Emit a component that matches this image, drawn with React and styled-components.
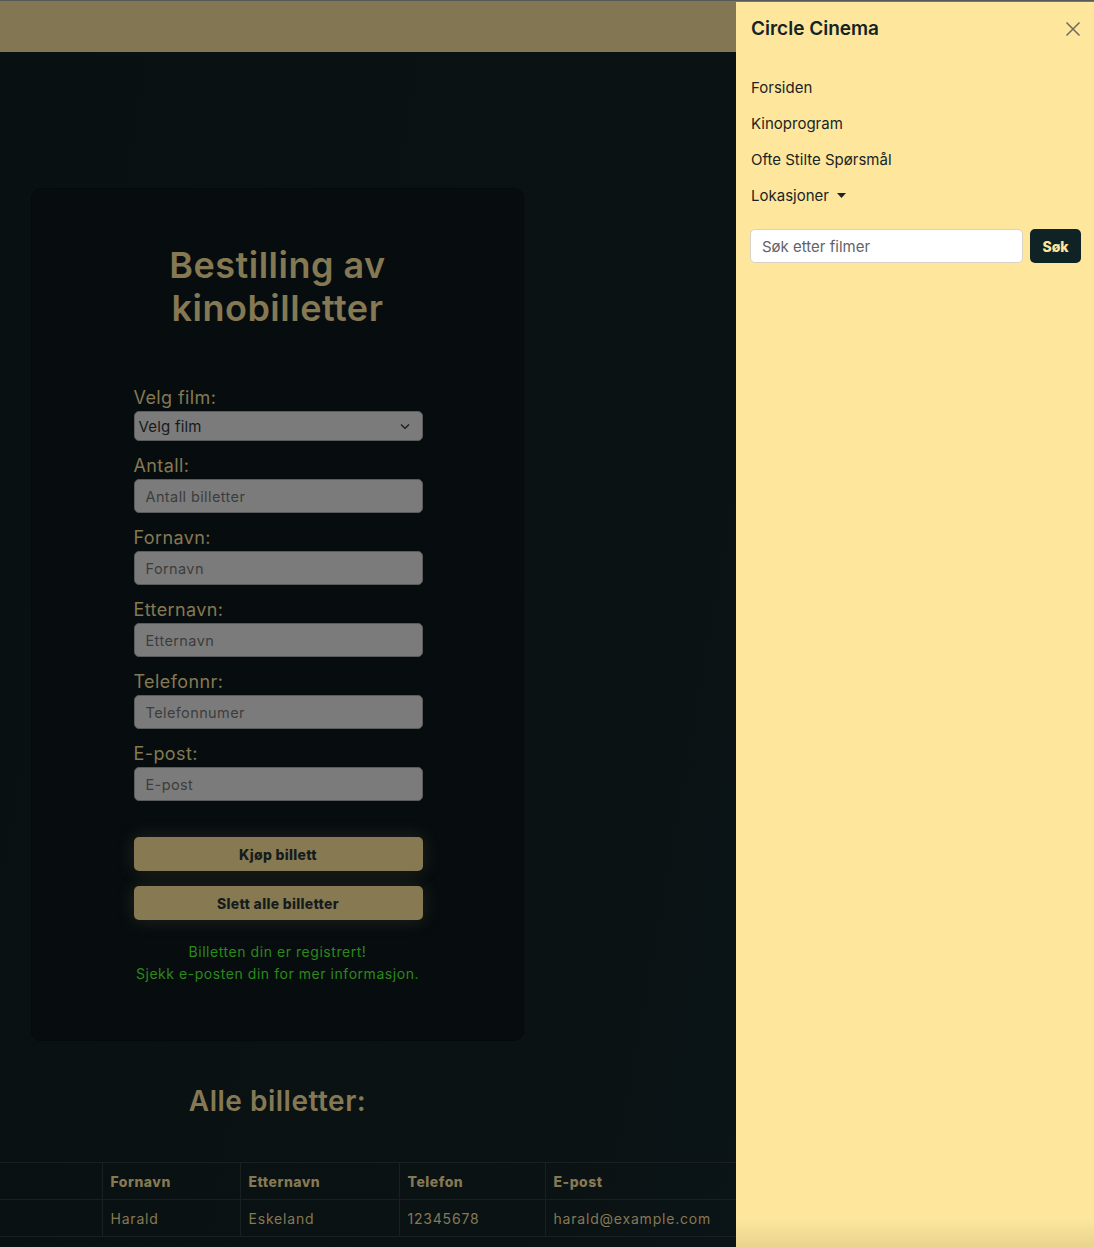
import React from "react";
import styled, { createGlobalStyle } from "styled-components";

const Global = createGlobalStyle`
  * { box-sizing: border-box; }
  html, body { margin: 0; padding: 0; }
  body {
    font-family: Inter, "Noto Sans", "DejaVu Sans", sans-serif;
    background: #0a1214;
    overflow: hidden;
  }
`;

const Page = styled.div`
  position: relative;
  width: 1094px;
  height: 1247px;
  border-top: 1px solid #555a5c;
  background: linear-gradient(100deg, #091012 0%, #0a1214 55%, #0c1618 100%);
  overflow: hidden;
`;

const NavBar = styled.header`
  height: 51px;
  background: #827752;
`;

const Main = styled.main`
  display: flex;
  flex-direction: column;
`;

const LeftColumn = styled.section`
  width: 555px;
  padding: 136px 31px 0;
  display: flex;
  flex-direction: column;
  align-items: stretch;
`;

const Card = styled.div`
  border: 1px solid #050a0b;
  border-radius: 10px;
  background: #070d0f;
  padding: 55px 0 55px;
  display: flex;
  flex-direction: column;
  align-items: center;
`;

const Title = styled.h1`
  margin: 0;
  font-size: 36px;
  line-height: 43px;
  font-weight: 600;
  color: #857953;
  text-align: center;
  letter-spacing: 0.5px;
`;

const Form = styled.form`
  width: 289px;
  margin: 54px 0 0 1px;
  display: flex;
  flex-direction: column;
`;

const Group = styled.div`
  display: flex;
  flex-direction: column;
  margin-bottom: 11px;
`;

const Label = styled.label`
  font-size: 18px;
  line-height: 27px;
  color: #857953;
  font-weight: 400;
  letter-spacing: 0.4px;
`;

const SelectBox = styled.div`
  height: 30px;
  border: 1px solid #5c5c5c;
  border-radius: 5px;
  background: #7b7b7b;
  display: flex;
  align-items: center;
  justify-content: space-between;
  padding: 0 12px 0 4px;
  color: #151a1a;
  font-size: 15px;
  letter-spacing: 0.2px;
`;

const Input = styled.div`
  height: 34px;
  border: 1px solid #5c5c5c;
  border-radius: 5px;
  background: #7b7b7b;
  display: flex;
  align-items: center;
  padding: 0 11px;
  color: #3b3d3d;
  font-size: 14.5px;
  letter-spacing: 0.4px;
`;

const Buttons = styled.div`
  margin-top: 25px;
  display: flex;
  flex-direction: column;
  gap: 15px;
`;

const Button = styled.button`
  height: 34px;
  border: none;
  border-radius: 5px;
  background: #877a53;
  color: #161c1c;
  font-family: inherit;
  font-size: 14px;
  font-weight: 800;
  letter-spacing: 0.3px;
  box-shadow: 0 0 18px rgba(135, 122, 83, 0.22);
  cursor: pointer;
`;

const Message = styled.p`
  margin: 21px 0 0;
  text-align: center;
  color: #2b8a17;
  font-size: 14px;
  line-height: 22px;
  letter-spacing: 0.55px;
`;

const SubTitle = styled.h2`
  margin: 40px 0 0;
  text-align: center;
  font-size: 28px;
  line-height: 40px;
  font-weight: 600;
  color: #857953;
  letter-spacing: 0.5px;
`;

const Table = styled.table`
  margin-top: 41px;
  width: 1094px;
  border-collapse: collapse;
  table-layout: fixed;
`;

const Th = styled.th`
  text-align: left;
  height: 37px;
  padding: 0 8px;
  font-size: 14px;
  font-weight: 800;
  letter-spacing: 0.5px;
  color: #857953;
  border-top: 1px solid #1a2022;
  border-bottom: 1px solid #1a2022;
  border-left: ${(p) => (p.$first ? "none" : "1px solid #1a2022")};
`;

const Td = styled.td`
  height: 37px;
  padding: 0 8px;
  font-size: 14px;
  letter-spacing: 0.8px;
  color: #857953;
  border-bottom: 1px solid #1a2022;
  border-left: ${(p) => (p.$first ? "none" : "1px solid #1a2022")};
`;

const Offcanvas = styled.aside`
  position: absolute;
  top: 1px;
  right: 0;
  bottom: 0;
  width: 358px;
  background: linear-gradient(to bottom, #fee79d 0, #fee79d calc(100% - 30px), #e9d38e 100%);
  display: flex;
  flex-direction: column;
`;

const OffHeader = styled.div`
  display: flex;
  justify-content: space-between;
  align-items: flex-start;
  padding: 14px 10px 0 15px;
  height: 54px;
`;

const OffTitle = styled.h5`
  margin: 0;
  font-size: 19px;
  line-height: 26px;
  font-weight: 600;
  color: #132426;
`;

const CloseButton = styled.button`
  width: 22px;
  height: 22px;
  border: none;
  background: transparent;
  padding: 0;
  margin-top: 2px;
  cursor: pointer;
  display: flex;
  align-items: center;
  justify-content: center;
`;

const OffBody = styled.div`
  padding: 13px 14px 0 14px;
  display: flex;
  flex-direction: column;
`;

const NavList = styled.nav`
  display: flex;
  flex-direction: column;
`;

const NavLink = styled.a`
  display: flex;
  align-items: center;
  gap: 8px;
  height: 36px;
  font-size: 15px;
  color: #1a2424;
  text-decoration: none;
  padding-left: 1px;
`;

const SearchRow = styled.div`
  margin-top: 16px;
  display: flex;
  gap: 7px;
  align-items: center;
`;

const SearchInput = styled.div`
  flex: 1;
  height: 34px;
  background: #fff;
  border: 1px solid #d8d3c4;
  border-radius: 5px;
  display: flex;
  align-items: center;
  padding: 0 11px;
  font-size: 15px;
  color: #5f6368;
`;

const SearchButton = styled.button`
  width: 51px;
  height: 34px;
  border: none;
  border-radius: 5px;
  background: #0f2224;
  color: #fee79d;
  font-family: inherit;
  font-size: 14px;
  font-weight: 800;
  margin-right: -1px;
`;

const fields = [
  ["Antall:", "Antall billetter"],
  ["Fornavn:", "Fornavn"],
  ["Etternavn:", "Etternavn"],
  ["Telefonnr:", "Telefonnumer"],
  ["E-post:", "E-post"],
];

const cols = [102, 138, 159, 146, 549];

export default function App() {
  return (
    <>
      <Global />
      <Page>
        <NavBar />
        <Main>
          <LeftColumn>
            <Card>
              <Title>
                Bestilling av
                <br />
                kinobilletter
              </Title>
              <Form onSubmit={(e) => e.preventDefault()}>
                <Group>
                  <Label>Velg film:</Label>
                  <SelectBox>
                    <span>Velg film</span>
                    <svg width="10" height="7" viewBox="0 0 10 7">
                      <path d="M1 1.5 L5 5.2 L9 1.5" fill="none" stroke="#1a1e1e" strokeWidth="1.4" />
                    </svg>
                  </SelectBox>
                </Group>
                {fields.map(([l, p]) => (
                  <Group key={l}>
                    <Label>{l}</Label>
                    <Input>{p}</Input>
                  </Group>
                ))}
                <Buttons>
                  <Button type="button">Kjøp billett</Button>
                  <Button type="button">Slett alle billetter</Button>
                </Buttons>
              </Form>
              <Message>
                Billetten din er registrert!
                <br />
                Sjekk e-posten din for mer informasjon.
              </Message>
            </Card>
            <SubTitle>Alle billetter:</SubTitle>
          </LeftColumn>
          <Table>
            <colgroup>
              {cols.map((w, i) => (
                <col key={i} style={{ width: w }} />
              ))}
            </colgroup>
            <thead>
              <tr>
                <Th $first></Th>
                <Th>Fornavn</Th>
                <Th>Etternavn</Th>
                <Th>Telefon</Th>
                <Th>E-post</Th>
              </tr>
            </thead>
            <tbody>
              <tr>
                <Td $first></Td>
                <Td>Harald</Td>
                <Td>Eskeland</Td>
                <Td>12345678</Td>
                <Td>harald@example.com</Td>
              </tr>
            </tbody>
          </Table>
        </Main>
        <Offcanvas>
          <OffHeader>
            <OffTitle>Circle Cinema</OffTitle>
            <CloseButton aria-label="Lukk">
              <svg width="16" height="16" viewBox="0 0 16 16">
                <path d="M1.5 1.5 L14.5 14.5 M14.5 1.5 L1.5 14.5" stroke="#6e6a5c" strokeWidth="1.5" />
              </svg>
            </CloseButton>
          </OffHeader>
          <OffBody>
            <NavList>
              <NavLink href="#">Forsiden</NavLink>
              <NavLink href="#">Kinoprogram</NavLink>
              <NavLink href="#">Ofte Stilte Spørsmål</NavLink>
              <NavLink href="#">
                Lokasjoner
                <svg width="9" height="5" viewBox="0 0 9 5">
                  <path d="M0 0 L9 0 L4.5 5 Z" fill="#1a2424" />
                </svg>
              </NavLink>
            </NavList>
            <SearchRow>
              <SearchInput>Søk etter filmer</SearchInput>
              <SearchButton type="button">Søk</SearchButton>
            </SearchRow>
          </OffBody>
        </Offcanvas>
      </Page>
    </>
  );
}
